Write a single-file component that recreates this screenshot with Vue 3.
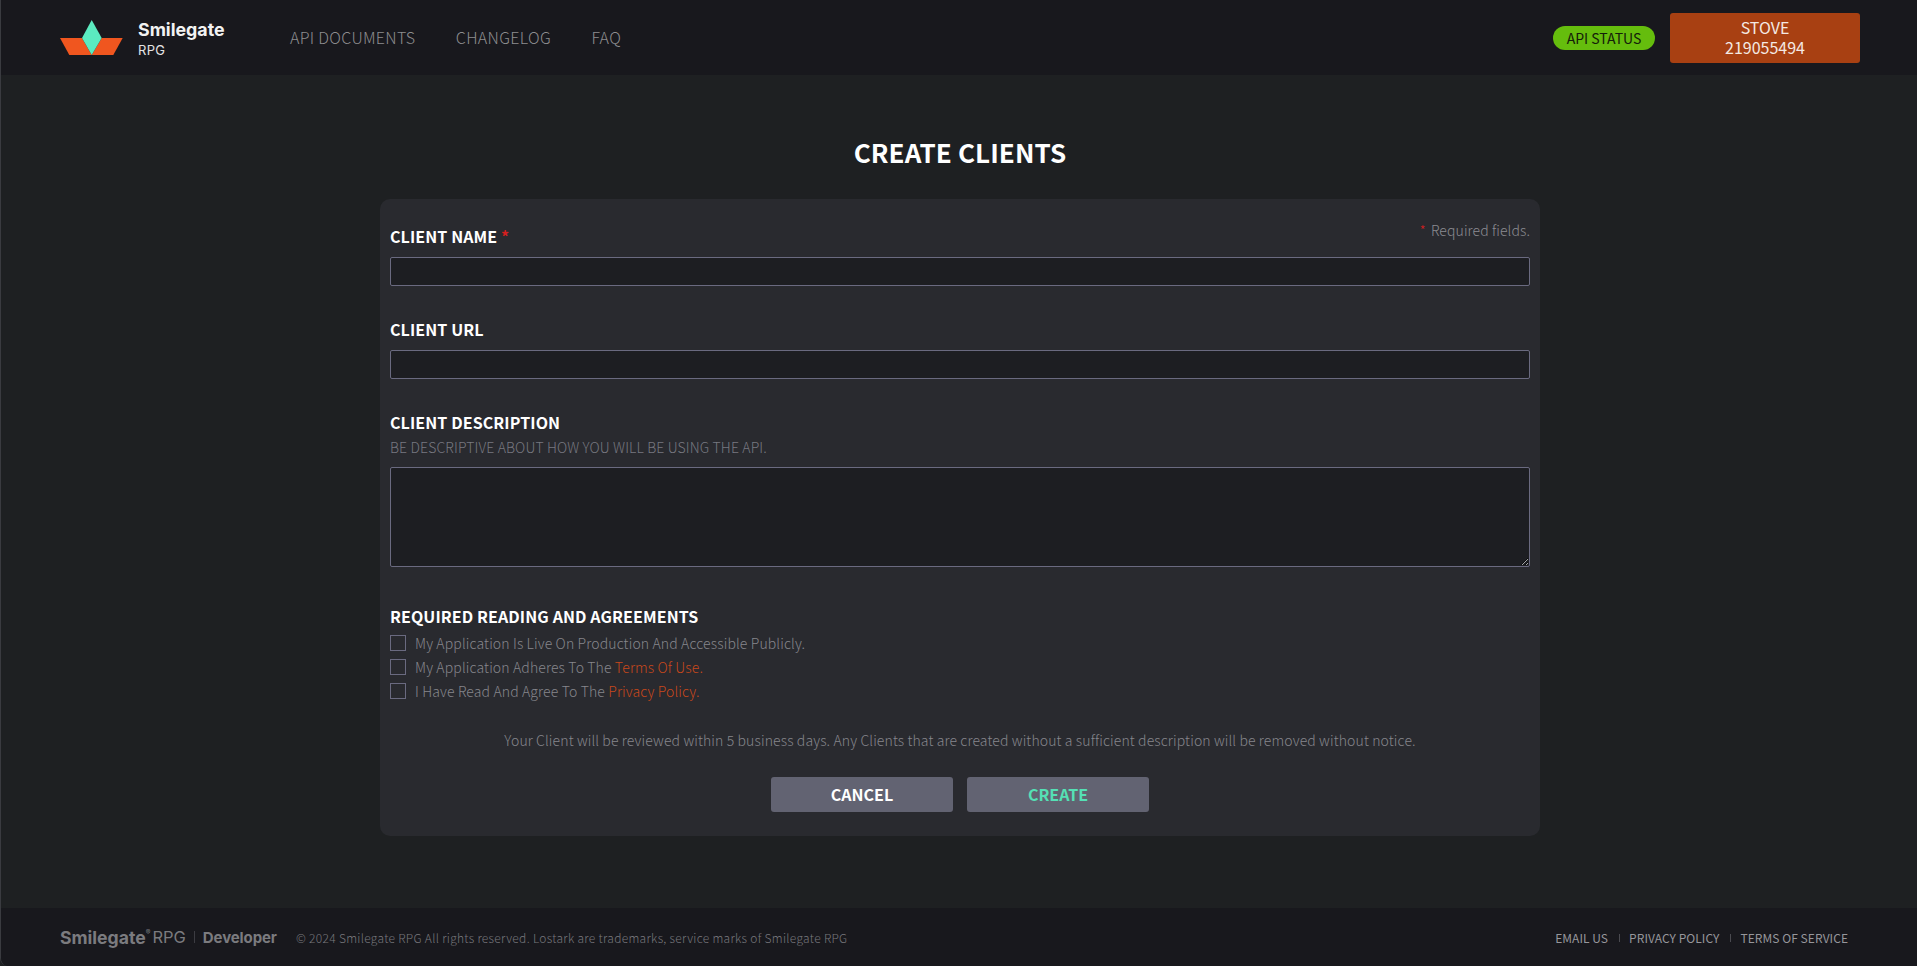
<script setup>
const links = ['API DOCUMENTS', 'CHANGELOG', 'FAQ']
const footerLinks = ['EMAIL US', 'PRIVACY POLICY', 'TERMS OF SERVICE']
</script>

<template>
  <div class="page">
    <header class="top">
      <div class="brand">
        <svg class="mark" width="63" height="36" viewBox="0 0 63 36" aria-hidden="true">
          <path d="M0 18H22L31.7 35H9.3Z" fill="#f0561f" />
          <path d="M62.7 18H41.7L31.7 35H53.3Z" fill="#f0561f" />
          <path d="M31.7 0L41.7 18L31.7 35L22 18Z" fill="#5bebc0" />
        </svg>
        <div class="brand-text">
          <span class="brand-name">Smilegate</span>
          <span class="brand-sub">RPG</span>
        </div>
      </div>
      <nav class="nav">
        <a v-for="l in links" :key="l">{{ l }}</a>
      </nav>
      <div class="top-right">
        <span class="status">API STATUS</span>
        <button class="account"><span>STOVE</span><span>219055494</span></button>
      </div>
    </header>

    <main class="main">
      <h1>CREATE CLIENTS</h1>
      <form class="panel" @submit.prevent>
        <p class="req"><i class="star">*</i>Required fields.</p>
        <label class="lbl first">CLIENT NAME <i>*</i></label>
        <input class="field" type="text" />
        <label class="lbl">CLIENT URL</label>
        <input class="field" type="text" />
        <label class="lbl">CLIENT DESCRIPTION</label>
        <p class="hint">BE DESCRIPTIVE ABOUT HOW YOU WILL BE USING THE API.</p>
        <textarea class="area"></textarea>
        <div class="lbl agree-title">REQUIRED READING AND AGREEMENTS</div>
        <div class="checks">
          <label class="check"><span class="box"></span>My Application Is Live On Production And Accessible Publicly.</label>
          <label class="check"><span class="box"></span>My Application Adheres To The&nbsp;<a>Terms Of Use.</a></label>
          <label class="check"><span class="box"></span>I Have Read And Agree To The&nbsp;<a>Privacy Policy.</a></label>
        </div>
        <p class="notice">Your Client will be reviewed within 5 business days. Any Clients that are created without a sufficient description will be removed without notice.</p>
        <div class="actions">
          <button class="btn" type="button">CANCEL</button>
          <button class="btn go" type="submit">CREATE</button>
        </div>
      </form>
    </main>

    <footer class="foot">
      <div class="foot-brand">
        <b>Smilegate</b><sup>®</sup><span class="frpg">RPG</span><span class="fsep"></span><b class="fdev">Developer</b>
      </div>
      <span class="copy">© 2024 Smilegate RPG All rights reserved. Lostark are trademarks, service marks of Smilegate RPG</span>
      <div class="foot-links">
        <a v-for="l in footerLinks" :key="l">{{ l }}</a>
      </div>
    </footer>
  </div>
</template>

<style>
html, body { margin: 0; background: #1e2022; }
</style>

<style scoped>
* { box-sizing: border-box; }
.page {
  height: 966px;
  display: flex;
  flex-direction: column;
  background: #1e2022;
  font-family: "Noto Sans CJK KR", "Noto Sans", sans-serif;
  border-left: 1px solid #3a3b40;
  border-bottom-left-radius: 8px;
  overflow: hidden;
}
.top {
  height: 75px;
  flex: none;
  display: flex;
  align-items: center;
  background: #18181d;
  padding: 0 57px 0 59px;
}
.brand { display: flex; align-items: center; width: 230px; }
.mark { margin-top: 1px; }
.brand-text { display: flex; flex-direction: column; margin-left: 15px; color: #f2f2f2; padding-top: 2px; }
.brand-name { font: 700 17.8px/20px Inter, sans-serif; }
.brand-sub { font: 400 13px/16px Inter, sans-serif; margin-top: 2px; letter-spacing: 0.3px; color: #e4e4e4; }
.nav { display: flex; gap: 40.5px; margin-bottom: 1px; }
.nav a { color: #8d8d8f; font-size: 16px; font-weight: 300; letter-spacing: 0.3px; }
.top-right { margin-left: auto; display: flex; align-items: center; gap: 15px; }
.status {
  background: #65bd0d;
  color: #14200a;
  font-size: 14px;
  line-height: 24px;
  height: 24px;
  width: 102px;
  text-align: center;
  border-radius: 12px;
}
.account {
  width: 190px;
  height: 50px;
  border: 0;
  border-radius: 3px;
  background: #a84012;
  color: #f4e9e3;
  font: 400 16px/20px "Noto Sans CJK KR", sans-serif;
  padding: 0 0 1px;
  display: flex;
  flex-direction: column;
  align-items: center;
  justify-content: center;
}
.main { flex: 1; display: flex; flex-direction: column; align-items: center; padding-left: 2px; }
h1 {
  margin: 59px 0 0;
  height: 65px;
  line-height: 36px;
  font-size: 26px;
  font-weight: 700;
  letter-spacing: 0.1px;
  color: #fff;
}
.panel {
  position: relative;
  width: 1160px;
  height: 637px;
  background: #292a2f;
  border-radius: 10px;
  padding: 0 10px;
  display: flex;
  flex-direction: column;
}
.req {
  position: absolute;
  right: 10px;
  top: 21px;
  margin: 0;
  font-size: 14px;
  line-height: 20px;
  font-weight: 300;
  letter-spacing: 0.1px;
  color: #8c8c92;
}
.star { margin-right: 5px; }
i { font-style: normal; color: #d31f1f; }
.lbl {
  display: block;
  margin-top: 32px;
  height: 32px;
  font-size: 16px;
  line-height: 22px;
  font-weight: 700;
  letter-spacing: 0.1px;
  color: #fff;
}
.lbl.first { margin-top: 26px; }
.field, .area {
  display: block;
  width: 100%;
  background: #1d1e22;
  border: 1px solid #6a6a80;
  border-radius: 2px;
  padding: 0;
  margin: 0;
}
.field { height: 29px; flex: none; }
.hint {
  margin: -6px 0 0;
  height: 30px;
  font-size: 14px;
  line-height: 20px;
  font-weight: 300;
  letter-spacing: 0.13px;
  color: #777880;
}
.area { height: 100px; flex: none; resize: vertical; }
.agree-title { margin-top: 38px; height: 26px; }
.checks { display: flex; flex-direction: column; }
.check {
  display: flex;
  align-items: center;
  height: 24px;
  font-size: 14px;
  font-weight: 300;
  letter-spacing: 0.13px;
  color: #86868c;
}
.box {
  width: 16px;
  height: 16px;
  border: 1px solid #6a6a80;
  margin-right: 9px;
  flex: none;
}
.check a { color: #c8481b; }
.notice {
  margin: 26.5px 0 0;
  text-align: center;
  font-size: 14px;
  line-height: 20px;
  font-weight: 300;
  letter-spacing: 0.12px;
  color: #86868c;
}
.actions { display: flex; justify-content: center; gap: 14px; margin-top: 27.5px; }
.btn {
  width: 182px;
  height: 35px;
  border: 0;
  border-radius: 3px;
  background: #626372;
  color: #fff;
  font: 700 16px/35px "Noto Sans CJK KR", sans-serif;
  padding: 0;
}
.btn.go { color: #55e0b5; }
.foot {
  height: 58px;
  flex: none;
  display: flex;
  align-items: center;
  background: #18181d;
  padding: 0 69px 0 59px;
  color: #77777c;
}
.foot-brand { display: flex; align-items: center; font-family: Inter, sans-serif; color: #7b7b7f; font-size: 17.6px; width: 236px; }
.foot-brand b { font-weight: 700; }
.foot-brand .fdev { font-size: 15px; letter-spacing: -0.1px; }
.foot-brand sup { font-size: 7px; align-self: flex-start; line-height: 12px; }
.frpg { margin-left: 2px; font-size: 16.5px; font-weight: 400; }
.fsep { width: 1px; height: 12px; background: #3c3c42; margin: 0 8px; }
.copy { font-size: 12px; font-weight: 300; letter-spacing: 0.3px; color: #77777c; }
.foot-links { margin-left: auto; display: flex; }
.foot-links a { font-size: 12px; color: #96969b; font-weight: 400; padding: 0 10.5px; letter-spacing: 0.05px; position: relative; }
.foot-links a:last-child { padding-right: 0; }
.foot-links a + a::before {
  content: "";
  position: absolute;
  left: 0;
  top: 5px;
  width: 1px;
  height: 8px;
  background: #4a4a50;
}
</style>
